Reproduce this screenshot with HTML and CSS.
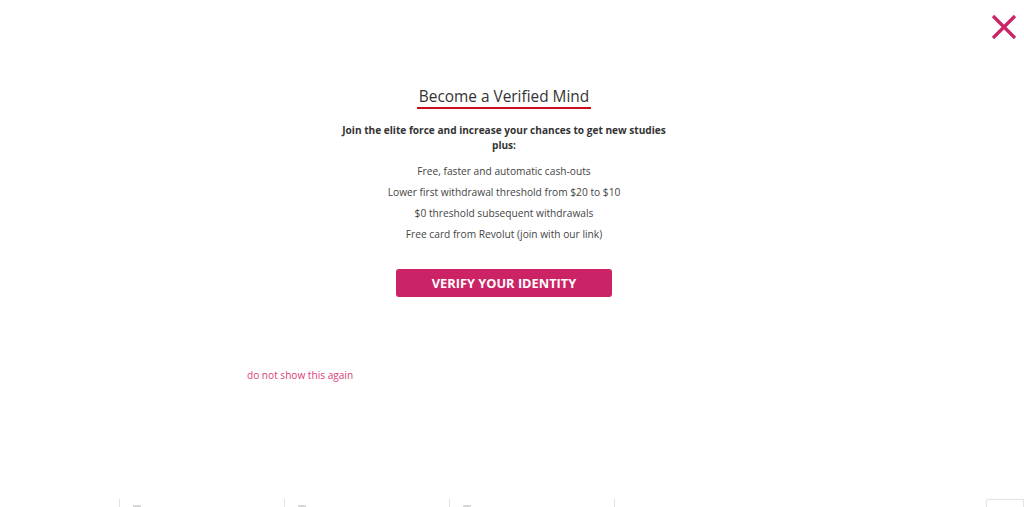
FILE: index.html
```html
<!DOCTYPE html>
<html lang="en">
<head>
    <meta charset="UTF-8" />
    <meta name="viewport" content="width=device-width, initial-scale=1.0"/>
    <title>Become a Verified Mind</title>
    <link rel="stylesheet" href="styles.css">
</head>
<body>

<!-- Page behind the popup -->
<div class="page-footer">
    <div class="footer-col"><span class="footer-icon"></span></div>
    <div class="footer-col"><span class="footer-icon"></span></div>
    <div class="footer-col"><span class="footer-icon"></span></div>
    <div class="footer-col"></div>
</div>
<div class="badge"></div>

<!-- Verify popup -->
<div class="verify-overlay">
    <a class="close-btn" href="#" aria-label="Close">
        <svg width="26" height="26" viewBox="0 0 26 26">
            <path d="M2 2 L24 24 M24 2 L2 24" stroke="#cc2366" stroke-width="3.2" fill="none"/>
        </svg>
    </a>

    <div class="verify-box">
        <h1 class="verify-title"><span>Become a Verified Mind</span></h1>
        <p class="verify-lead">Join the elite force and increase your chances to get new studies plus:</p>

        <ul class="verify-list">
            <li>Free, faster and automatic cash-outs</li>
            <li>Lower first withdrawal threshold from $20 to $10</li>
            <li>$0 threshold subsequent withdrawals</li>
            <li>Free card from Revolut (join with our link)</li>
        </ul>

        <button class="verify-btn" type="button">VERIFY YOUR IDENTITY</button>

        <a class="dont-show" href="#">do not show this again</a>
    </div>
</div>

</body>
</html>
```

FILE: styles.css
```css
* {
    box-sizing: border-box;
    margin: 0;
    padding: 0;
}

body {
    font-family: 'Open Sans', sans-serif;
    background: #fff;
    color: #333;
    height: 100vh;
    overflow: hidden;
    position: relative;
}

/* Footer of the page under the popup */
.page-footer {
    position: absolute;
    left: 119px;
    bottom: 0;
    display: flex;
    height: 8px;
}
.footer-col {
    width: 165px;
    border-left: 1px solid #e2e2e2;
    padding: 6px 0 0 13px;
}
.footer-icon {
    display: block;
    width: 8px;
    height: 3px;
    border-radius: 1px 1px 0 0;
    background: #d6d6d6;
}
.badge {
    position: absolute;
    right: 0;
    bottom: -4px;
    width: 38px;
    height: 12px;
    border: 1px solid #e4e4e4;
    border-radius: 3px 0 0 0;
    background: #fff;
    box-shadow: 0 0 2px rgba(0,0,0,0.06);
}

/* Popup */
.verify-overlay {
    position: absolute;
    top: 0;
    left: 0;
    right: 0;
    bottom: 0;
    padding: 87px 16px 0 0;
}
.close-btn {
    position: absolute;
    top: 14px;
    right: 7px;
    display: block;
    width: 26px;
    height: 26px;
}

.verify-box {
    width: 514px;
    margin: 0 auto;
    display: flex;
    flex-direction: column;
    align-items: center;
    text-align: center;
}

.verify-title {
    font-size: 15.4px;
    font-weight: 400;
    line-height: 20px;
    color: #333;
}
.verify-title span {
    display: inline-block;
    padding: 0 2px;
    border-bottom: 2px solid #c8101e;
}

.verify-lead {
    width: 340px;
    margin-top: 14px;
    font-size: 10.1px;
    font-weight: 700;
    line-height: 15px;
    color: #333;
}

.verify-list {
    list-style: none;
    margin-top: 8px;
}
.verify-list li {
    font-size: 10.2px;
    line-height: 21px;
    color: #444;
}

.verify-btn {
    margin-top: 24px;
    width: 216px;
    height: 28px;
    border: none;
    border-radius: 3px;
    background: #cc2366;
    color: #fff;
    font-family: 'Open Sans', sans-serif;
    font-size: 12.8px;
    font-weight: 700;
    cursor: pointer;
}

.dont-show {
    align-self: flex-start;
    margin-top: 71px;
    font-size: 10.1px;
    line-height: 14px;
    color: #d9417a;
    text-decoration: none;
}
```
